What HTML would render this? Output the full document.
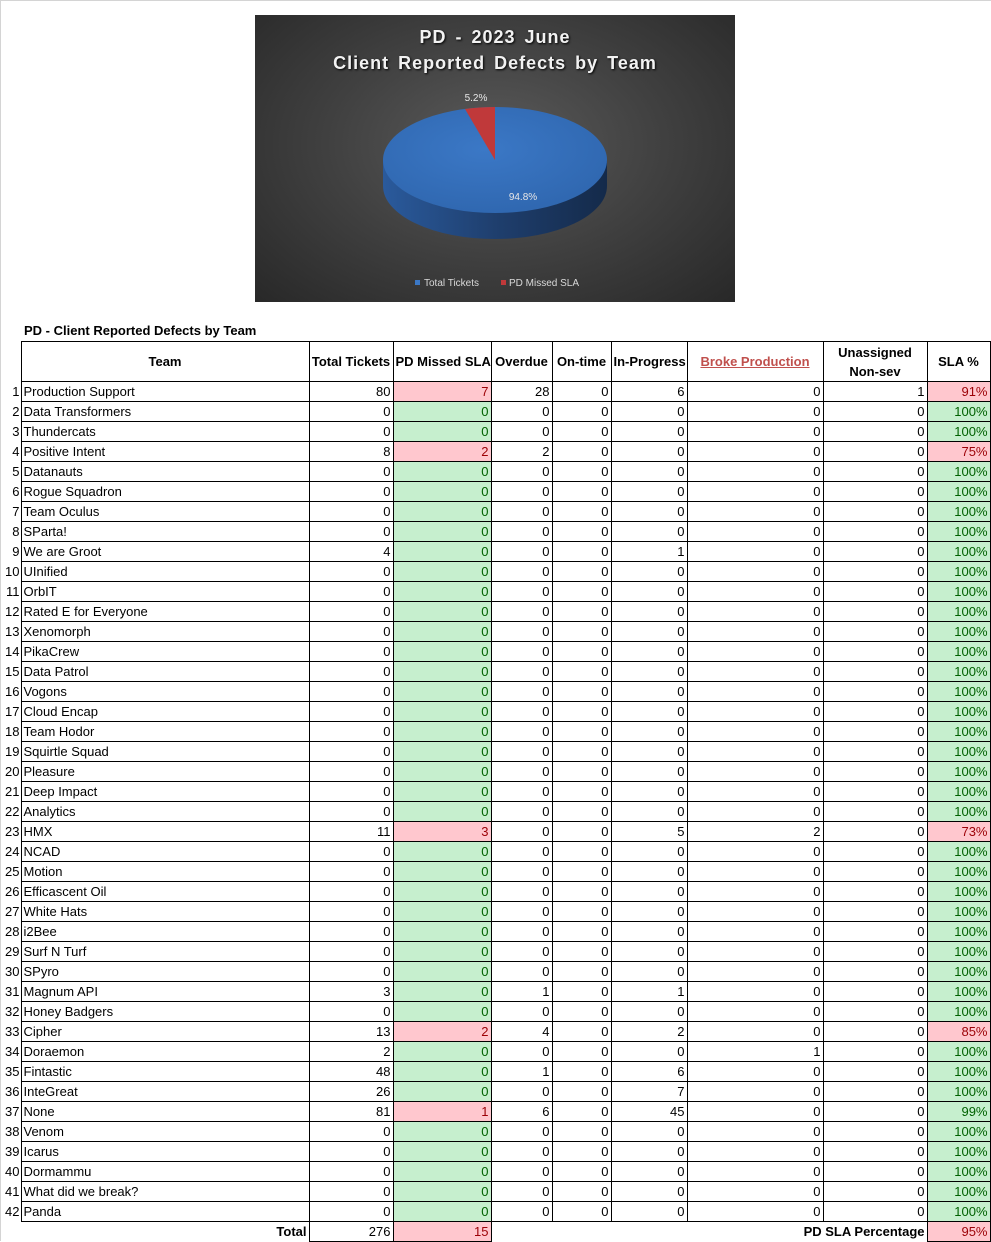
<!DOCTYPE html>
<html><head><meta charset="utf-8"><style>
html,body{margin:0;padding:0;background:#fff;}
body{width:991px;height:1241px;position:relative;overflow:hidden;font-family:"Liberation Sans",sans-serif;font-size:13px;color:#000;}
.frame{position:absolute;left:0;top:0;width:990px;height:1240px;border-left:1px solid #d4d4d4;border-top:1px solid #d4d4d4;}
.chart{position:absolute;left:255px;top:15px;width:480px;height:287px;background:radial-gradient(ellipse at 50% 45%,#5a5a5a 0%,#404040 50%,#282828 100%);}
.ttl{position:absolute;left:0;width:480px;text-align:center;color:#f2f2f2;font-weight:bold;font-size:18px;letter-spacing:1px;word-spacing:3px;text-shadow:1px 1px 2px #000;}
.cap{position:absolute;left:24px;top:323px;font-weight:bold;font-size:13px;}
table{position:absolute;left:0;top:341px;width:990px;border-collapse:collapse;table-layout:fixed;}
td{height:19px;line-height:19px;padding:0 2px;border:1px solid #000;white-space:nowrap;overflow:hidden;text-align:right;}
td.n{border:none;text-align:right;padding:0 1px 0 0;}
td.t{text-align:left;}
tr.h td{height:39px;line-height:19px;text-align:center;font-weight:bold;}
.r{background:#ffc7ce;color:#9c0006;}
.g{background:#c6efce;color:#006100;}
td.x{border:none;}
</style></head><body>
<div class="frame"></div>
<div class="chart">
<div class="ttl" style="top:12px">PD - 2023 June</div>
<div class="ttl" style="top:38px">Client Reported Defects by Team</div>
<svg width="480" height="287" style="position:absolute;left:0;top:0">
<defs>
<linearGradient id="side" x1="0" x2="1" y1="0" y2="0"><stop offset="0" stop-color="#2a5a9c"/><stop offset="0.5" stop-color="#1f3f6e"/><stop offset="1" stop-color="#142a4a"/></linearGradient>
<radialGradient id="top" cx="0.45" cy="0.4" r="0.7"><stop offset="0" stop-color="#3b78c6"/><stop offset="1" stop-color="#2e65ad"/></radialGradient>
</defs>
<path d="M128 145 L128 171 A112 53 0 0 0 352 171 L352 145 Z" fill="url(#side)"/>
<ellipse cx="240" cy="145" rx="112" ry="53" fill="url(#top)"/>
<path d="M240 145 L240 92 A112 53 0 0 0 210 94 Z" fill="#c0393a"/>
<text x="221" y="86" fill="#e6e6e6" font-size="10" font-family="Liberation Sans,sans-serif" text-anchor="middle">5.2%</text>
<text x="268" y="185" fill="#e6e6e6" font-size="10" font-family="Liberation Sans,sans-serif" text-anchor="middle">94.8%</text>
<rect x="160" y="265" width="5" height="5" fill="#3b78c6"/>
<text x="169" y="271" fill="#d9d9d9" font-size="10" font-family="Liberation Sans,sans-serif">Total Tickets</text>
<rect x="246" y="265" width="5" height="5" fill="#c0393a"/>
<text x="254" y="271" fill="#d9d9d9" font-size="10" font-family="Liberation Sans,sans-serif">PD Missed SLA</text>
</svg>
</div>
<div class="cap">PD - Client Reported Defects by Team</div>
<table>
<colgroup><col style="width:21px"><col style="width:288px"><col style="width:84px"><col style="width:98px"><col style="width:61px"><col style="width:59px"><col style="width:76px"><col style="width:136px"><col style="width:104px"><col style="width:63px"></colgroup>
<tr class="h"><td class="n"></td><td>Team</td><td>Total Tickets</td><td>PD Missed SLA</td><td>Overdue</td><td>On-time</td><td>In-Progress</td><td><span style="color:#c0504d;text-decoration:underline">Broke Production</span></td><td>Unassigned<br>Non-sev</td><td>SLA %</td></tr>
<tr><td class="n">1</td><td class="t">Production Support</td><td>80</td><td class="r">7</td><td>28</td><td>0</td><td>6</td><td>0</td><td>1</td><td class="r">91%</td></tr>
<tr><td class="n">2</td><td class="t">Data Transformers</td><td>0</td><td class="g">0</td><td>0</td><td>0</td><td>0</td><td>0</td><td>0</td><td class="g">100%</td></tr>
<tr><td class="n">3</td><td class="t">Thundercats</td><td>0</td><td class="g">0</td><td>0</td><td>0</td><td>0</td><td>0</td><td>0</td><td class="g">100%</td></tr>
<tr><td class="n">4</td><td class="t">Positive Intent</td><td>8</td><td class="r">2</td><td>2</td><td>0</td><td>0</td><td>0</td><td>0</td><td class="r">75%</td></tr>
<tr><td class="n">5</td><td class="t">Datanauts</td><td>0</td><td class="g">0</td><td>0</td><td>0</td><td>0</td><td>0</td><td>0</td><td class="g">100%</td></tr>
<tr><td class="n">6</td><td class="t">Rogue Squadron</td><td>0</td><td class="g">0</td><td>0</td><td>0</td><td>0</td><td>0</td><td>0</td><td class="g">100%</td></tr>
<tr><td class="n">7</td><td class="t">Team Oculus</td><td>0</td><td class="g">0</td><td>0</td><td>0</td><td>0</td><td>0</td><td>0</td><td class="g">100%</td></tr>
<tr><td class="n">8</td><td class="t">SParta!</td><td>0</td><td class="g">0</td><td>0</td><td>0</td><td>0</td><td>0</td><td>0</td><td class="g">100%</td></tr>
<tr><td class="n">9</td><td class="t">We are Groot</td><td>4</td><td class="g">0</td><td>0</td><td>0</td><td>1</td><td>0</td><td>0</td><td class="g">100%</td></tr>
<tr><td class="n">10</td><td class="t">UInified</td><td>0</td><td class="g">0</td><td>0</td><td>0</td><td>0</td><td>0</td><td>0</td><td class="g">100%</td></tr>
<tr><td class="n">11</td><td class="t">OrbIT</td><td>0</td><td class="g">0</td><td>0</td><td>0</td><td>0</td><td>0</td><td>0</td><td class="g">100%</td></tr>
<tr><td class="n">12</td><td class="t">Rated E for Everyone</td><td>0</td><td class="g">0</td><td>0</td><td>0</td><td>0</td><td>0</td><td>0</td><td class="g">100%</td></tr>
<tr><td class="n">13</td><td class="t">Xenomorph</td><td>0</td><td class="g">0</td><td>0</td><td>0</td><td>0</td><td>0</td><td>0</td><td class="g">100%</td></tr>
<tr><td class="n">14</td><td class="t">PikaCrew</td><td>0</td><td class="g">0</td><td>0</td><td>0</td><td>0</td><td>0</td><td>0</td><td class="g">100%</td></tr>
<tr><td class="n">15</td><td class="t">Data Patrol</td><td>0</td><td class="g">0</td><td>0</td><td>0</td><td>0</td><td>0</td><td>0</td><td class="g">100%</td></tr>
<tr><td class="n">16</td><td class="t">Vogons</td><td>0</td><td class="g">0</td><td>0</td><td>0</td><td>0</td><td>0</td><td>0</td><td class="g">100%</td></tr>
<tr><td class="n">17</td><td class="t">Cloud Encap</td><td>0</td><td class="g">0</td><td>0</td><td>0</td><td>0</td><td>0</td><td>0</td><td class="g">100%</td></tr>
<tr><td class="n">18</td><td class="t">Team Hodor</td><td>0</td><td class="g">0</td><td>0</td><td>0</td><td>0</td><td>0</td><td>0</td><td class="g">100%</td></tr>
<tr><td class="n">19</td><td class="t">Squirtle Squad</td><td>0</td><td class="g">0</td><td>0</td><td>0</td><td>0</td><td>0</td><td>0</td><td class="g">100%</td></tr>
<tr><td class="n">20</td><td class="t">Pleasure</td><td>0</td><td class="g">0</td><td>0</td><td>0</td><td>0</td><td>0</td><td>0</td><td class="g">100%</td></tr>
<tr><td class="n">21</td><td class="t">Deep Impact</td><td>0</td><td class="g">0</td><td>0</td><td>0</td><td>0</td><td>0</td><td>0</td><td class="g">100%</td></tr>
<tr><td class="n">22</td><td class="t">Analytics</td><td>0</td><td class="g">0</td><td>0</td><td>0</td><td>0</td><td>0</td><td>0</td><td class="g">100%</td></tr>
<tr><td class="n">23</td><td class="t">HMX</td><td>11</td><td class="r">3</td><td>0</td><td>0</td><td>5</td><td>2</td><td>0</td><td class="r">73%</td></tr>
<tr><td class="n">24</td><td class="t">NCAD</td><td>0</td><td class="g">0</td><td>0</td><td>0</td><td>0</td><td>0</td><td>0</td><td class="g">100%</td></tr>
<tr><td class="n">25</td><td class="t">Motion</td><td>0</td><td class="g">0</td><td>0</td><td>0</td><td>0</td><td>0</td><td>0</td><td class="g">100%</td></tr>
<tr><td class="n">26</td><td class="t">Efficascent Oil</td><td>0</td><td class="g">0</td><td>0</td><td>0</td><td>0</td><td>0</td><td>0</td><td class="g">100%</td></tr>
<tr><td class="n">27</td><td class="t">White Hats</td><td>0</td><td class="g">0</td><td>0</td><td>0</td><td>0</td><td>0</td><td>0</td><td class="g">100%</td></tr>
<tr><td class="n">28</td><td class="t">i2Bee</td><td>0</td><td class="g">0</td><td>0</td><td>0</td><td>0</td><td>0</td><td>0</td><td class="g">100%</td></tr>
<tr><td class="n">29</td><td class="t">Surf N Turf</td><td>0</td><td class="g">0</td><td>0</td><td>0</td><td>0</td><td>0</td><td>0</td><td class="g">100%</td></tr>
<tr><td class="n">30</td><td class="t">SPyro</td><td>0</td><td class="g">0</td><td>0</td><td>0</td><td>0</td><td>0</td><td>0</td><td class="g">100%</td></tr>
<tr><td class="n">31</td><td class="t">Magnum API</td><td>3</td><td class="g">0</td><td>1</td><td>0</td><td>1</td><td>0</td><td>0</td><td class="g">100%</td></tr>
<tr><td class="n">32</td><td class="t">Honey Badgers</td><td>0</td><td class="g">0</td><td>0</td><td>0</td><td>0</td><td>0</td><td>0</td><td class="g">100%</td></tr>
<tr><td class="n">33</td><td class="t">Cipher</td><td>13</td><td class="r">2</td><td>4</td><td>0</td><td>2</td><td>0</td><td>0</td><td class="r">85%</td></tr>
<tr><td class="n">34</td><td class="t">Doraemon</td><td>2</td><td class="g">0</td><td>0</td><td>0</td><td>0</td><td>1</td><td>0</td><td class="g">100%</td></tr>
<tr><td class="n">35</td><td class="t">Fintastic</td><td>48</td><td class="g">0</td><td>1</td><td>0</td><td>6</td><td>0</td><td>0</td><td class="g">100%</td></tr>
<tr><td class="n">36</td><td class="t">InteGreat</td><td>26</td><td class="g">0</td><td>0</td><td>0</td><td>7</td><td>0</td><td>0</td><td class="g">100%</td></tr>
<tr><td class="n">37</td><td class="t">None</td><td>81</td><td class="r">1</td><td>6</td><td>0</td><td>45</td><td>0</td><td>0</td><td class="g">99%</td></tr>
<tr><td class="n">38</td><td class="t">Venom</td><td>0</td><td class="g">0</td><td>0</td><td>0</td><td>0</td><td>0</td><td>0</td><td class="g">100%</td></tr>
<tr><td class="n">39</td><td class="t">Icarus</td><td>0</td><td class="g">0</td><td>0</td><td>0</td><td>0</td><td>0</td><td>0</td><td class="g">100%</td></tr>
<tr><td class="n">40</td><td class="t">Dormammu</td><td>0</td><td class="g">0</td><td>0</td><td>0</td><td>0</td><td>0</td><td>0</td><td class="g">100%</td></tr>
<tr><td class="n">41</td><td class="t">What did we break?</td><td>0</td><td class="g">0</td><td>0</td><td>0</td><td>0</td><td>0</td><td>0</td><td class="g">100%</td></tr>
<tr><td class="n">42</td><td class="t">Panda</td><td>0</td><td class="g">0</td><td>0</td><td>0</td><td>0</td><td>0</td><td>0</td><td class="g">100%</td></tr>
<tr><td class="n"></td><td style="border-left:none;border-bottom:none;font-weight:bold">Total</td><td>276</td><td class="r">15</td><td class="x" colspan="3"></td><td class="x" colspan="2" style="font-weight:bold">PD SLA Percentage</td><td class="r">95%</td></tr>
</table>
</body></html>
